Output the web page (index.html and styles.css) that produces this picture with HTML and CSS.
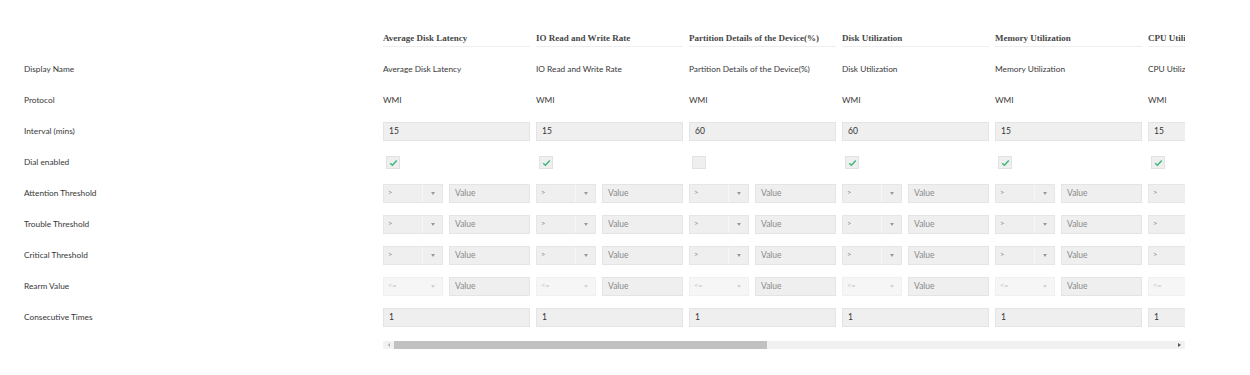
FILE: index.html
```html
<!DOCTYPE html>
<html>
<head>
<meta charset="utf-8">
<link rel="stylesheet" href="styles.css">
</head>
<body>
<div class="page">
  <div class="labels">
    <div class="row"></div>
    <div class="row lbl">Display Name</div>
    <div class="row lbl">Protocol</div>
    <div class="row lbl">Interval (mins)</div>
    <div class="row lbl">Dial enabled</div>
    <div class="row lbl">Attention Threshold</div>
    <div class="row lbl">Trouble Threshold</div>
    <div class="row lbl">Critical Threshold</div>
    <div class="row lbl">Rearm Value</div>
    <div class="row lbl">Consecutive Times</div>
  </div>
  <div class="scroller">
    <div class="viewport">
      <div class="grid" id="grid"></div>
    </div>
    <div class="scrollbar">
      <span class="arrow left"></span>
      <div class="track"><div class="thumb"></div></div>
      <span class="arrow right"></span>
    </div>
  </div>
</div>
<script>
const cols = [
  ["Average Disk Latency", "15", true],
  ["IO Read and Write Rate", "15", true],
  ["Partition Details of the Device(%)", "60", false],
  ["Disk Utilization", "60", true],
  ["Memory Utilization", "15", true],
  ["CPU Utilization", "15", true],
  ["Network Interface Traffic", "15", true],
  ["Disk I/O Statistics", "15", true],
  ["Process Count", "15", true],
  ["System Uptime", "60", true],
  ["Page File Usage", "15", true]
];
const sel = (op, dis) => `<div class="thr"><div class="select${dis ? ' dis' : ''}"><span class="op">${op}</span><span class="caret"><span class="tri"></span></span></div><div class="input ph">Value</div></div>`;
let html = "";
for (const [name, interval, dial] of cols) {
  html += `<div class="col">
    <div class="row"><div class="head">${name}</div></div>
    <div class="row txt">${name}</div>
    <div class="row txt">WMI</div>
    <div class="row"><div class="input">${interval}</div></div>
    <div class="row"><span class="check">${dial ? '<svg width="9" height="8" viewBox="0 0 9 8"><path d="M1.2 4.3 L3.4 6.3 L7.8 1.6" fill="none" stroke="#3fb67a" stroke-width="1.5"/></svg>' : ''}</span></div>
    <div class="row">${sel('&gt;')}</div>
    <div class="row">${sel('&gt;')}</div>
    <div class="row">${sel('&gt;')}</div>
    <div class="row">${sel('&lt;=', true)}</div>
    <div class="row"><div class="input">1</div></div>
  </div>`;
}
document.getElementById("grid").innerHTML = html;
</script>
</body>
</html>
```
FILE: styles.css
```css
html, body { margin: 0; padding: 0; background: #fff; }
body { font-family: Lato, "Open Sans", sans-serif; font-size: 8.3px; color: #333; }
.page { display: flex; padding-top: 23px; }
.labels { width: 383px; padding-left: 24px; box-sizing: border-box; flex: none; }
.row { height: 31px; display: flex; align-items: center; }
.lbl, .txt { color: #383838; padding-bottom: 2px; box-sizing: border-box; }
.scroller { width: 802px; flex: none; }
.viewport { overflow: hidden; width: 802px; }
.grid { display: flex; gap: 6px; width: max-content; }
.col { width: 147px; flex: none; }
.col .row { white-space: nowrap; }
.head { align-self: flex-start; margin-top: 7px; width: 100%; height: 16px; line-height: 16px; border-bottom: 1px solid #eeeeee; font-family: "Liberation Serif", serif; font-weight: bold; font-size: 9px; color: #474747; white-space: nowrap; overflow: hidden; }
.input { box-sizing: border-box; height: 19px; line-height: 17px; width: 147px; background: #efefef; border: 1px solid #e4e4e4; padding: 0 5px; color: #333; font-size: 8.5px; }
.input.ph { width: 81px; color: #8a8a8a; }
.check { box-sizing: border-box; width: 14px; height: 13px; margin-left: 3px; background: #efefef; border: 1px solid #e2e2e2; display: flex; align-items: center; justify-content: center; }
.thr { display: flex; gap: 6px; }
.select { box-sizing: border-box; width: 60px; height: 19px; background: #efefef; border: 1px solid #e6e6e6; display: flex; }
.select .op { flex: 1; padding-left: 4px; line-height: 15px; font-size: 7.5px; color: #888; }
.select .caret { width: 19px; border-left: 1px solid #f7f7f7; display: flex; align-items: center; justify-content: center; }
.tri { width: 0; height: 0; border-left: 2.5px solid transparent; border-right: 2.5px solid transparent; border-top: 3px solid #999; }
.select.dis { background: #f6f6f6; border-color: #f0f0f0; }
.select.dis .op { color: #c4c4c4; }
.select.dis .tri { border-top-color: #d2d2d2; }
.scrollbar { display: flex; align-items: center; height: 8px; margin-top: 8px; background: #f1f1f1; }
.track { flex: 1; height: 8px; }
.thumb { width: 373px; height: 8px; background: #c1c1c1; }
.arrow { width: 11px; height: 8px; display: flex; align-items: center; justify-content: center; flex: none; }
.arrow.left::before { content: ""; border-top: 2px solid transparent; border-bottom: 2px solid transparent; border-right: 2px solid #a9a9a9; }
.arrow.right::before { content: ""; border-top: 2.5px solid transparent; border-bottom: 2.5px solid transparent; border-left: 3px solid #555; }
```
